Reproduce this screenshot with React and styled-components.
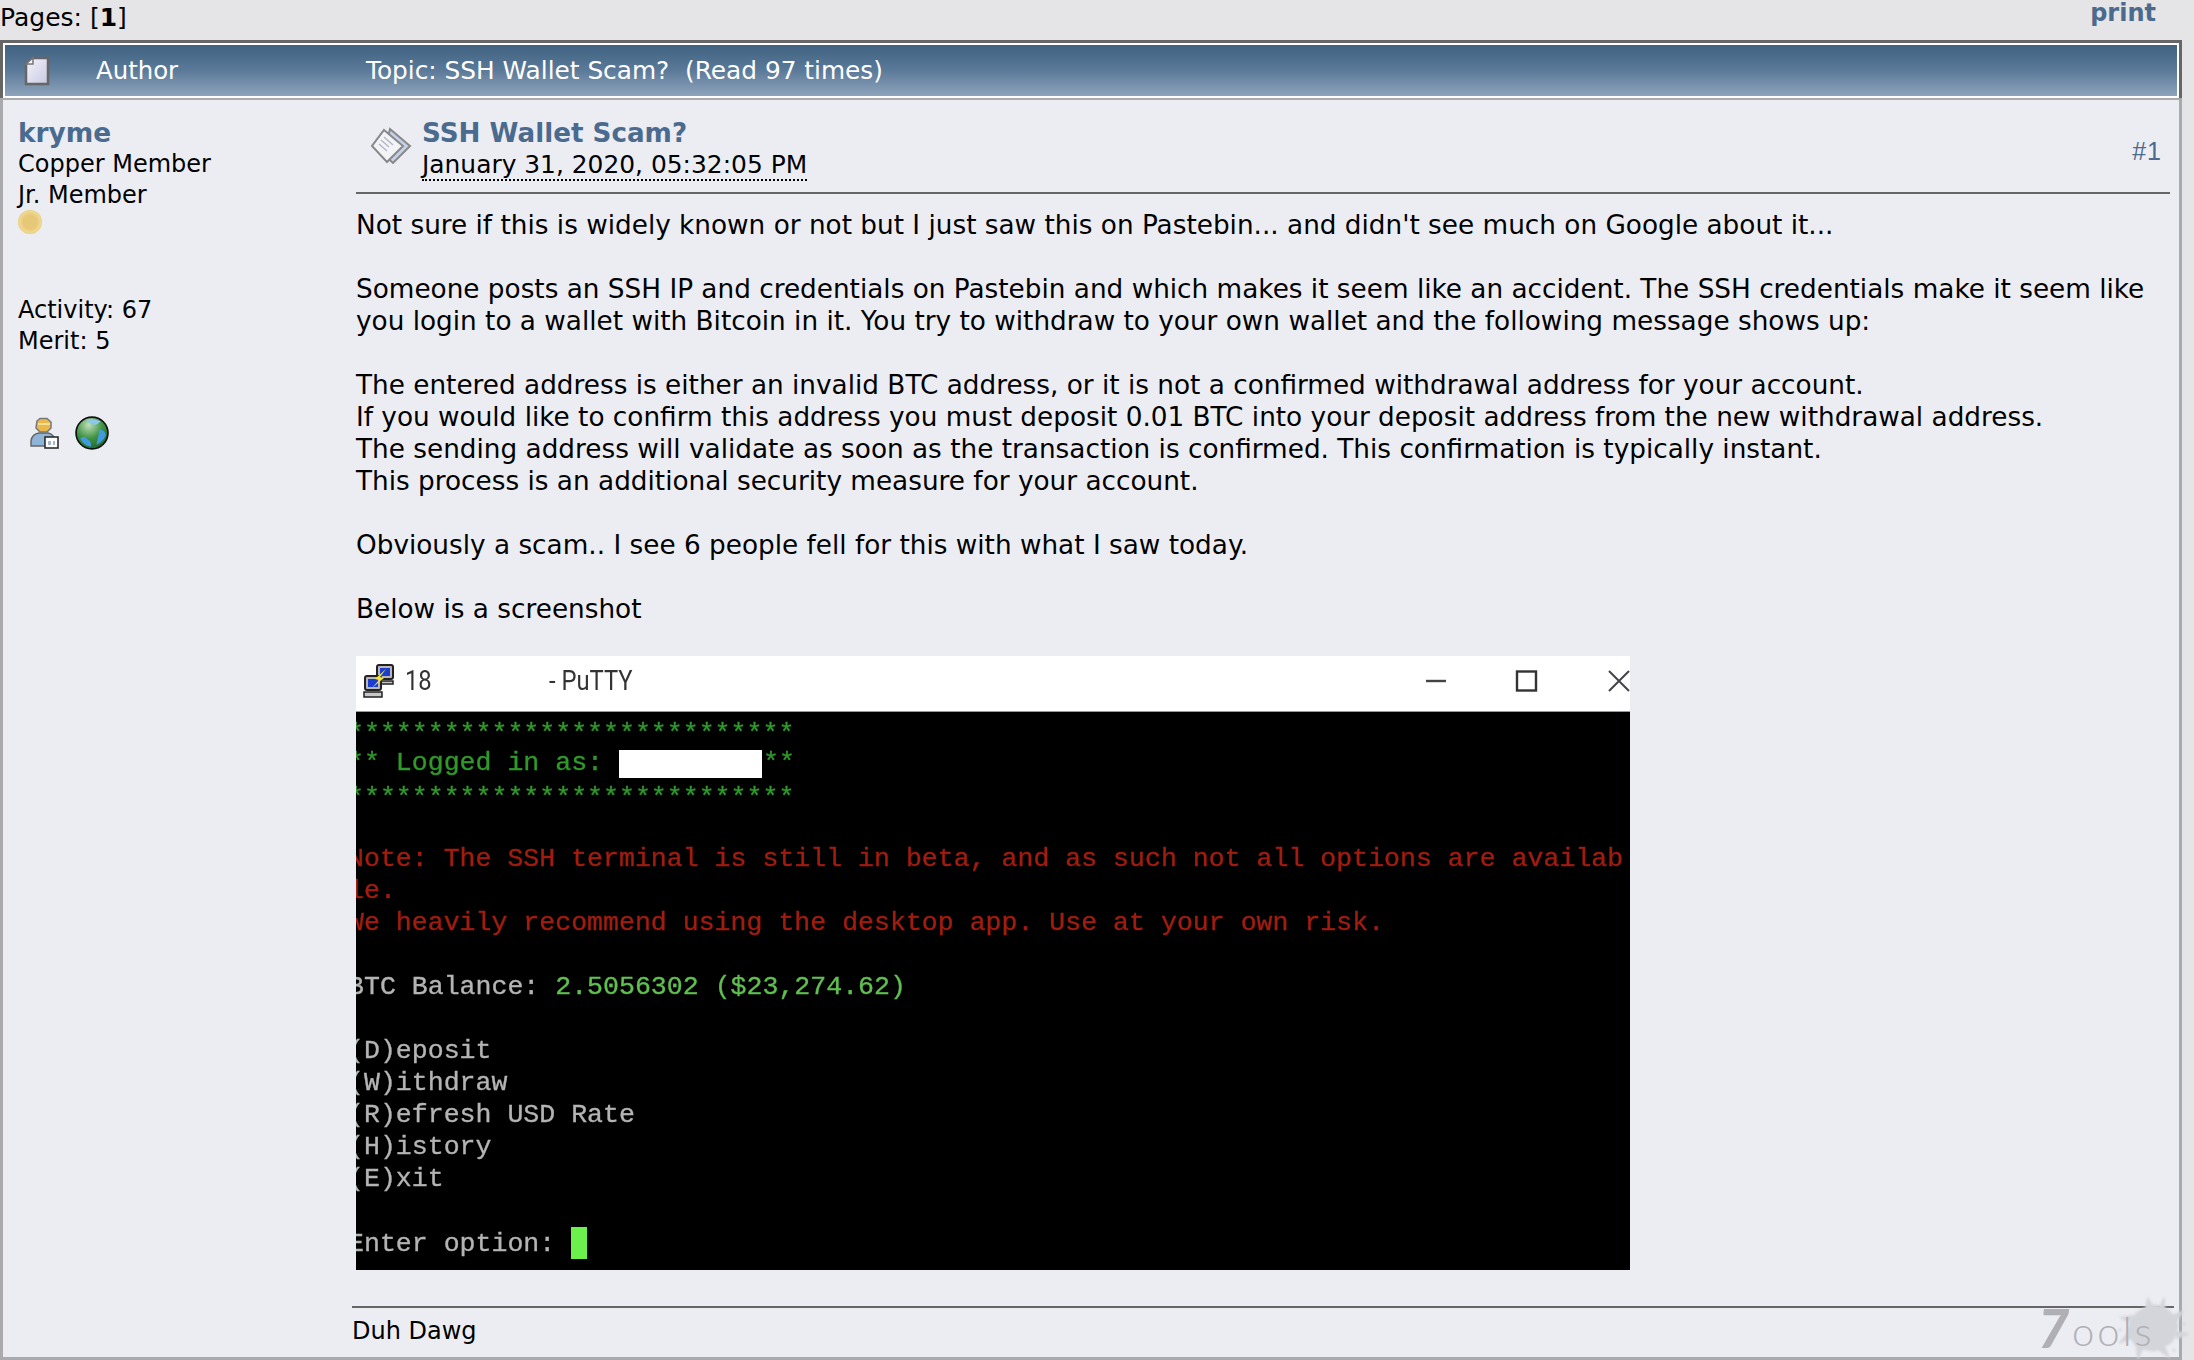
import React from 'react'
import styled, { createGlobalStyle } from 'styled-components'

const GlobalStyle = createGlobalStyle`
  html, body {
    margin: 0;
    padding: 0;
    background: #e5e5e8;
  }
  body {
    color: #000;
    font-family: "DejaVu Sans", Verdana, sans-serif;
    font-size: 24px;
    line-height: 32px;
  }
`

const link = '#4a6b8e'

const Page = styled.div`
  position: relative;
  width: 2194px;
  height: 1360px;
  overflow: hidden;
`

const PagesBar = styled.div`
  display: flex;
  justify-content: space-between;
  height: 40px;
  padding-right: 38px;
  font-size: 25px;
  line-height: 36px;
`

const PrintLink = styled.a`
  color: ${link};
  font-size: 24px;
  font-weight: bold;
  margin-top: -5px;
`

const Topic = styled.div`
  width: 2182px;
  height: 1320px;
  box-sizing: border-box;
  background: #ecedf3;
  border: solid #aaaaae;
  border-width: 0 3px 3px 3px;
`

const TopBorder = styled.div`
  height: 3px;
  background: #666;
  margin: 0 -3px;
`

const TitleBar = styled.div`
  display: grid;
  grid-template-columns: 72px 270px 1fr;
  align-items: center;
  height: 55px;
  box-sizing: border-box;
  margin: 0 -3px;
  padding-left: 21px;
  background: linear-gradient(#3f5f80, #5b7a99 50%, #92a7bf);
  border: solid #666;
  border-width: 0 3px;
  box-shadow: inset 0 0 0 2px #fff, 0 2px 0 #aaaaae;
  color: #fff;
`

const HeaderText = styled.span`
  font-size: ${props => props.$size}px;
`

const PostRow = styled.div`
  display: grid;
  grid-template-columns: 349px 1fr;
  padding-top: 25px;
`

const Poster = styled.div`
  padding-left: 15px;
  font-size: 24px;
`

const PosterName = styled.a`
  display: block;
  color: ${link};
  font-size: 26.4px;
  font-weight: bold;
  line-height: 32px;
  margin-top: -6px;
`

const PosterLine = styled.div`
  line-height: 31px;
`

const Coin = styled.div`
  width: 24px;
  height: 24px;
  margin-top: -1px;
  border-radius: 50%;
  background: radial-gradient(circle, #e6c878 0 40%, #f0d98f 62%, #c9a44e 100%);
`

const PosterStats = styled.div`
  margin-top: 61px;
`

const ContactIcons = styled.div`
  display: flex;
  gap: 16px;
  margin: 59px 0 0 11px;
  align-items: center;
`

const Post = styled.div`
  min-width: 0;
  margin-top: -25px;
  padding-right: 5px;
`

const PostHead = styled.div`
  display: flex;
  align-items: flex-start;
  height: 74px;
  padding: 20px 0 0 18px;
`

const PostIconBox = styled.div`
  width: 42px;
  height: 42px;
  margin-top: 7px;
`

const PostTitles = styled.div`
  margin-left: 10px;
  flex: 1;
`

const PostTitle = styled.a`
  display: block;
  color: ${link};
  font-size: 26.2px;
  font-weight: bold;
  line-height: 31px;
`

const PostDate = styled.span`
  display: inline-block;
  border-bottom: 2px dotted #000;
  font-size: 24.9px;
  line-height: 28px;
`

const PostNumber = styled.span`
  margin: 17px 12px 0 0;
  color: ${link};
  font-family: "Liberation Sans", Arial, sans-serif;
  font-size: 25px;
  letter-spacing: 1px;
`

const Rule = styled.hr`
  border: 0;
  height: 2px;
  background: #666;
  margin: 0 ${props => props.$inset}px 0 ${props => props.$left}px;
`

const Body = styled.div`
  padding: 15px 0 0 4px;
  font-size: 26.3px;
`

const Para = styled.p`
  margin: 0 0 32px;
  white-space: nowrap;
`

const Shot = styled.div`
  width: 1274px;
  height: 614px;
  margin-top: -1px;
`

const ShotBar = styled.div`
  display: flex;
  align-items: center;
  height: 56px;
  box-sizing: border-box;
  background: #fff;
  border-bottom: 1px solid #999;
  padding: 0 0 6px 6px;
  font-family: "Roboto", "Liberation Sans", sans-serif;
  font-size: 27px;
  color: #333;
  filter: blur(0.4px);
`

const ShotTitle = styled.span`
  display: inline-block;
  width: ${props => props.$w}px;
  margin-left: ${props => props.$ml}px;
  transform: scaleX(0.88);
  transform-origin: left center;
  white-space: nowrap;
`

const WinControls = styled.div`
  display: flex;
  margin-left: auto;
  align-items: center;
`

const Terminal = styled.div`
  height: 558px;
  padding-top: 3px;
  box-sizing: border-box;
  background: #000;
  overflow: hidden;
  font-family: "Liberation Mono", "Courier New", monospace;
  font-size: 26.57px;
  line-height: 32px;
  -webkit-text-stroke: 0.35px;
`

const TermLines = styled.div`
  margin-left: -8px;
  filter: blur(0.5px);
  white-space: pre;
`

const TermLine = styled.div`
  height: 32px;
  box-sizing: border-box;
  padding-top: ${props => (props.$stars ? '3px' : '0')};
  color: ${props => props.$c || '#b4b4b4'};
`

const Green = styled.span`
  color: ${props => props.$c};
`

const Masked = styled.span`
  display: inline-block;
  width: 143px;
  height: 28px;
  margin: 0 1px 0 0;
  vertical-align: -8px;
  background: #fff;
`

const Cursor = styled.span`
  display: inline-block;
  width: 16px;
  height: 32px;
  vertical-align: -8px;
  background: #6cf04c;
`

const Signature = styled.div`
  margin: 36px 0 0 0;
`

const SignatureText = styled.div`
  padding-top: 7px;
`

const Watermark = styled.div`
  position: absolute;
  left: 2036px;
  top: 1296px;
  width: 158px;
  height: 64px;
  color: #b0b0b4;
  font-family: "Lato", sans-serif;
  pointer-events: none;
`

const WatermarkSeven = styled.span`
  position: absolute;
  left: 2px;
  top: 10px;
  font-size: 54px;
  line-height: 44px;
  font-weight: 900;
  font-style: italic;
`

const WatermarkRest = styled.span`
  position: absolute;
  left: 36px;
  top: 20px;
  font-size: 40px;
  line-height: 30px;
  font-weight: 300;
  letter-spacing: 3px;
`

const Splash = styled.svg`
  position: absolute;
  left: 76px;
  top: 0;
  filter: blur(0.8px);
`

const NewTopicIcon = () => (
  <svg width="26" height="30" viewBox="0 0 26 30">
    <defs>
      <linearGradient id="pg" x1="0" y1="0" x2="1" y2="1">
        <stop offset="0" stopColor="#f4f4fb" />
        <stop offset="1" stopColor="#c8c8e4" />
      </linearGradient>
    </defs>
    <path d="M9 2 H24 V28 H2 V8 Z" fill="url(#pg)" stroke="#666" strokeWidth="2.5" />
    <path d="M9 2 V8 H2 Z" fill="#fff" stroke="#777" strokeWidth="1.5" />
  </svg>
)

const PostIcon = () => (
  <svg width="42" height="42" viewBox="0 0 42 42">
    <path d="M20 4 L40 21 L23 38 L14 30 Z" fill="#c5d0ea" stroke="#888" strokeWidth="2" />
    <path d="M14 5 L33 21 L17 37 L2 21 Z" fill="#f3f4f8" stroke="#888" strokeWidth="2" />
    <path d="M11 15 L19 22 M9 19 L17 26 M14 12 L23 20" stroke="#b5b8c4" strokeWidth="1.5" />
  </svg>
)

const ProfileIcon = () => (
  <svg width="30" height="32" viewBox="0 0 30 32">
    <path d="M2 29 V24 Q3 17 10 16 H19 Q25 17 26 24 V29 Z" fill="#8fb4d8" stroke="#666" strokeWidth="1.5" />
    <path d="M8 4 L11 1.5 H18 L22 5 V11 L18 15 H11 L7 11 Z" fill="#eab94e" stroke="#777" strokeWidth="1.5" />
    <path d="M9 7 H21" stroke="#f6dd92" strokeWidth="2" />
    <rect x="16" y="20" width="13" height="11" fill="#fff" stroke="#222" strokeWidth="1.5" />
    <path d="M19 24 H22 V28 H19 Z M24 24 H26 V28 H24 Z" fill="#a8b8c8" />
  </svg>
)

const GlobeIcon = () => (
  <svg width="34" height="34" viewBox="0 0 32 32">
    <defs>
      <radialGradient id="land" cx="0.4" cy="0.25" r="0.85">
        <stop offset="0" stopColor="#bfe0b8" />
        <stop offset="0.5" stopColor="#3f9244" />
        <stop offset="1" stopColor="#1c5c28" />
      </radialGradient>
    </defs>
    <circle cx="16" cy="16" r="15" fill="url(#land)" stroke="#111" strokeWidth="1.6" />
    <path d="M11 3 Q17 2 24 5 Q21 9 17 8 Q13 7 11 3 Z" fill="#8cc8ea" />
    <path d="M5 21 Q9 18 12 22 Q16 24 15 29 Q8 28 5 21 Z" fill="#3f9ade" />
    <path d="M23 13 Q28 13 29 18 Q26 25 20 27 Q22 20 23 13 Z" fill="#3f9ade" />
  </svg>
)

const PuttyIcon = () => (
  <svg width="34" height="36" viewBox="0 0 34 36">
    <rect x="15" y="2" width="16" height="14" rx="2" fill="#b8b8b8" stroke="#222" strokeWidth="2" />
    <rect x="18" y="5" width="10" height="8" fill="#1c3ed0" />
    <path d="M15 18 H31 V21 H15 Z" fill="#c8c8c8" stroke="#222" strokeWidth="1.5" />
    <rect x="3" y="13" width="16" height="14" rx="2" fill="#b8b8b8" stroke="#222" strokeWidth="2" />
    <rect x="6" y="16" width="10" height="8" fill="#1c3ed0" />
    <path d="M2 29 H20 V34 H2 Z" fill="#c8c8c8" stroke="#222" strokeWidth="1.5" />
    <path d="M24 6 L13 16 L17 17 L10 25 L22 15 L18 14 Z" fill="#f3e43c" />
  </svg>
)

const WinButtons = () => (
  <WinControls>
    <svg width="204" height="24" viewBox="0 0 204 24">
      <path d="M0 12 H20" stroke="#444" strokeWidth="2.4" />
      <rect x="91" y="2.5" width="19" height="19" fill="none" stroke="#333" strokeWidth="2.4" />
      <path d="M183 2 L203 22 M203 2 L183 22" stroke="#444" strokeWidth="2" />
    </svg>
  </WinControls>
)

const SplashBlot = () => (
  <Splash width="82" height="64" viewBox="0 0 82 64">
    <path d="M38 10 Q44 6 50 11 Q58 12 62 20 Q69 28 64 38 Q62 48 52 51 Q44 58 34 54 Q24 54 20 45 Q12 36 18 26 Q22 14 38 10 Z" fill="#d4d5da" />
    <path d="M34 12 L36 3 L40 10 M48 12 L52 2 L52 12 M60 20 L70 16 L64 26 M64 36 L76 38 L64 42 M52 50 L56 60 L46 53 M30 53 L26 62 L25 50 M19 42 L9 46 L17 36 M18 26 L10 22 L21 20" fill="#d4d5da" stroke="#d4d5da" strokeWidth="2" />
    <circle cx="72" cy="28" r="1.6" fill="#d4d5da" />
    <circle cx="8" cy="34" r="1.4" fill="#d4d5da" />
    <circle cx="62" cy="54" r="1.5" fill="#d4d5da" />
  </Splash>
)

const App = () => (
  <Page>
    <GlobalStyle />
    <PagesBar>
      <span>Pages: [<b>1</b>]</span>
      <PrintLink>print</PrintLink>
    </PagesBar>
    <Topic>
      <TopBorder />
      <TitleBar>
        <NewTopicIcon />
        <HeaderText $size={24.4}>Author</HeaderText>
        <HeaderText $size={24.8}>Topic: SSH Wallet Scam? &nbsp;(Read 97 times)</HeaderText>
      </TitleBar>
      <PostRow>
        <Poster>
          <PosterName>kryme</PosterName>
          <PosterLine>Copper Member</PosterLine>
          <PosterLine>Jr. Member</PosterLine>
          <Coin />
          <PosterStats>
            <PosterLine>Activity: 67</PosterLine>
            <PosterLine>Merit: 5</PosterLine>
          </PosterStats>
          <ContactIcons>
            <ProfileIcon />
            <GlobeIcon />
          </ContactIcons>
        </Poster>
        <Post>
          <PostHead>
            <PostIconBox><PostIcon /></PostIconBox>
            <PostTitles>
              <PostTitle>SSH Wallet Scam?</PostTitle>
              <PostDate>January 31, 2020, 05:32:05 PM</PostDate>
            </PostTitles>
            <PostNumber>#1</PostNumber>
          </PostHead>
          <Rule $left={4} $inset={4} />
          <Body>
            <Para>Not sure if this is widely known or not but I just saw this on Pastebin... and didn't see much on Google about it...</Para>
            <Para>
              Someone posts an SSH IP and credentials on Pastebin and which makes it seem like an accident. The SSH credentials make it seem like<br />
              you login to a wallet with Bitcoin in it. You try to withdraw to your own wallet and the following message shows up:
            </Para>
            <Para>
              The entered address is either an invalid BTC address, or it is not a confirmed withdrawal address for your account.<br />
              If you would like to confirm this address you must deposit 0.01 BTC into your deposit address from the new withdrawal address.<br />
              The sending address will validate as soon as the transaction is confirmed. This confirmation is typically instant.<br />
              This process is an additional security measure for your account.
            </Para>
            <Para>Obviously a scam.. I see 6 people fell for this with what I saw today.</Para>
            <Para>Below is a screenshot</Para>
            <Shot>
              <ShotBar>
                <PuttyIcon />
                <ShotTitle $ml={9} $w={144}>18</ShotTitle>
                <ShotTitle $ml={0} $w={100}>- PuTTY</ShotTitle>
                <WinButtons />
              </ShotBar>
              <Terminal>
                <TermLines>
                  <TermLine $c="#2f9a2a" $stars>{'*'.repeat(28)}</TermLine>
                  <TermLine $c="#2f9a2a">** Logged in as: <Masked />**</TermLine>
                  <TermLine $c="#2f9a2a" $stars>{'*'.repeat(28)}</TermLine>
                  <TermLine />
                  <TermLine $c="#a31c10">Note: The SSH terminal is still in beta, and as such not all options are availab</TermLine>
                  <TermLine $c="#a31c10">le.</TermLine>
                  <TermLine $c="#a31c10">We heavily recommend using the desktop app. Use at your own risk.</TermLine>
                  <TermLine />
                  <TermLine>BTC Balance: <Green $c="#5fc04f">2.5056302 ($23,274.62)</Green></TermLine>
                  <TermLine />
                  <TermLine>(D)eposit</TermLine>
                  <TermLine>(W)ithdraw</TermLine>
                  <TermLine>(R)efresh USD Rate</TermLine>
                  <TermLine>(H)istory</TermLine>
                  <TermLine>(E)xit</TermLine>
                  <TermLine />
                  <TermLine>Enter option: <Cursor /></TermLine>
                </TermLines>
              </Terminal>
            </Shot>
          </Body>
          <Signature>
            <Rule $left={0} $inset={0} />
            <SignatureText>Duh Dawg</SignatureText>
          </Signature>
        </Post>
      </PostRow>
    </Topic>
    <Watermark>
      <SplashBlot />
      <WatermarkSeven>7</WatermarkSeven>
      <WatermarkRest>ools</WatermarkRest>
    </Watermark>
  </Page>
)

export default App
